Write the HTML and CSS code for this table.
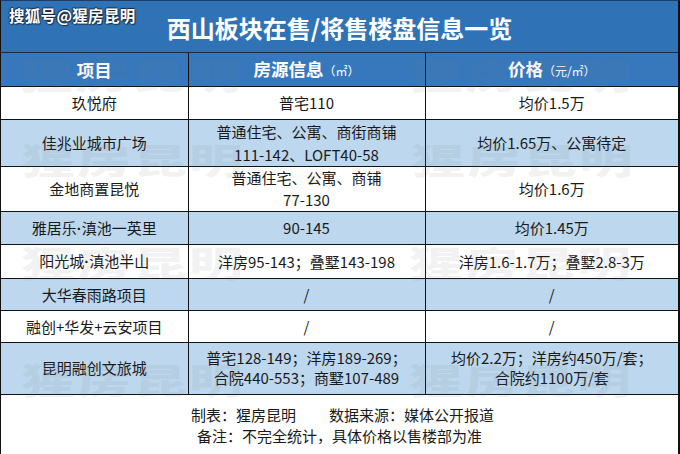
FILE: index.html
```html
<!DOCTYPE html>
<html lang="zh-CN">
<head>
<meta charset="utf-8">
<link rel="stylesheet" href="styles.css">
</head>
<body>
<div class="sheet">
  <div class="titlebar">
    <span class="brand">搜狐号@猩房昆明</span>
    <h1 class="title">西山板块在售/将售楼盘信息一览</h1>
  </div>
  <table class="grid">
    <colgroup><col class="c1"><col class="c2"><col class="c3"></colgroup>
    <thead>
      <tr class="head"><th>项目</th><th>房源信息<small>（㎡）</small></th><th>价格<small>（元/㎡）</small></th></tr>
    </thead>
    <tbody>
      <tr class="r1"><td>玖悦府</td><td>普宅110</td><td>均价1.5万</td></tr>
      <tr class="r2 alt"><td>佳兆业城市广场</td><td>普通住宅、公寓、商街商铺<br>111-142、LOFT40-58</td><td>均价1.65万、公寓待定</td></tr>
      <tr class="r3"><td>金地商置昆悦</td><td class="top">普通住宅、公寓、商铺<br>77-130</td><td>均价1.6万</td></tr>
      <tr class="r4 alt"><td>雅居乐<span class="dot">·</span>滇池一英里</td><td>90-145</td><td>均价1.45万</td></tr>
      <tr class="r5"><td>阳光城<span class="dot">·</span>滇池半山</td><td>洋房95-143；叠墅143-198</td><td>洋房1.6-1.7万；叠墅2.8-3万</td></tr>
      <tr class="r6 alt"><td>大华春雨路项目</td><td>/</td><td>/</td></tr>
      <tr class="r7"><td>融创+华发+云安项目</td><td>/</td><td>/</td></tr>
      <tr class="r8 alt"><td>昆明融创文旅城</td><td>普宅128-149；洋房189-269；<br>合院440-553；商墅107-489</td><td>均价2.2万；洋房约450万/套；<br>合院约1100万/套</td></tr>
    </tbody>
  </table>
  <div class="footer">
    <p class="note">制表：猩房昆明<span class="sp"></span>数据来源：媒体公开报道</p>
    <p class="note">备注：不完全统计，具体价格以售楼部为准</p>
  </div>
  <div class="wm w1" aria-hidden="true">猩房昆明</div>
  <div class="wm w2" aria-hidden="true">猩房昆明</div>
  <div class="wm w3" aria-hidden="true">猩房昆明</div>
  <div class="wm w4" aria-hidden="true">猩房昆明</div>
  <div class="wm w5" aria-hidden="true">猩房昆明</div>
  <div class="wm w6" aria-hidden="true">猩房昆明</div>
  <div class="wm w7" aria-hidden="true">猩房昆明</div>
  <div class="wm w8" aria-hidden="true">猩房昆明</div>
</div>
</body>
</html>
```
FILE: styles.css
```css
* { box-sizing: border-box; }
html, body { margin: 0; padding: 0; background: #fff; }
body {
  width: 680px; height: 454px; overflow: hidden;
  font-family: "Noto Sans CJK SC", "Noto Sans", sans-serif;
  color: #1a1a1a;
}
.sheet {
  position: relative;
  width: 680px; height: 454px;
  border-left: 1.5px solid #111;
  border-right: 2px solid #111;
  border-top: 1px solid #1d3f66;
  overflow: hidden;
}
.titlebar {
  height: 52px;
  background: #2f73b6;
  display: flex; align-items: center; justify-content: center;
  position: relative;
  border-bottom: 1.5px solid #1a2c44;
}
.brand {
  position: absolute; left: 8px; top: 3px;
  font-size: 15.5px; font-weight: 700; color: #fff;
  text-shadow: 1px 1px 1px #1b2a3c, -1px 0 1px #1b2a3c, 0 -1px 1px #1b2a3c;
  letter-spacing: 0.3px;
}
.title {
  margin: 0; padding-top: 2px;
  font-size: 24px; font-weight: 700; color: #fff;
}
.grid {
  width: 100%;
  border-collapse: collapse;
  table-layout: fixed;
}
.c1 { width: 187px; }
.c2 { width: 237px; }
.grid th, .grid td {
  border: 1.5px solid #121212;
  text-align: center;
  padding: 0;
  font-size: 15px;
  line-height: 21px;
  font-weight: 400;
}
.grid tr > :first-child { border-left: none; }
.grid tr > :last-child { border-right: none; }
.grid thead tr > * { border-top: none; }
.head { height: 33px; background: #3778bd; }
.head th { color: #fff; font-weight: 700; font-size: 17.5px; }
.head small { font-size: 12px; font-weight: 400; }
.alt { background: #bdd7ee; }
.dot { font-family: "Liberation Sans", sans-serif; font-weight: 700; }
.r1 { height: 33px; }
.r2 { height: 45px; }
.r2 td { line-height: 23px; }
.r3 { height: 44px; }
.r3 td.top { line-height: 22px; }
.r4 { height: 33px; }
.r5 { height: 34px; }
.r6 { height: 32px; }
.r7 { height: 32px; }
.r8 { height: 52px; }
.r8 td { line-height: 20px; }
.footer {
  padding-top: 9px;
  text-align: center;
}
.note { margin: 0; font-size: 15px; line-height: 21px; }
.note:first-child { padding-left: 6px; }
.sp { display: inline-block; width: 33px; }
.wm {
  position: absolute;
  font-family: "Noto Sans CJK SC", sans-serif;
  font-weight: 900;
  font-size: 54px;
  letter-spacing: 2px;
  line-height: 1;
  color: rgba(120, 120, 120, 0.09);
  transform: scaleY(0.66);
  transform-origin: left top;
  pointer-events: none;
  user-select: none;
  white-space: nowrap;
}
.w1 { left: 18px; top: 55px; }
.w2 { left: 408px; top: 55px; }
.w3 { left: 20px; top: 140px; }
.w4 { left: 410px; top: 140px; }
.w5 { left: 20px; top: 243px; }
.w6 { left: 408px; top: 243px; }
.w7 { left: 20px; top: 360px; }
.w8 { left: 408px; top: 360px; }
```
